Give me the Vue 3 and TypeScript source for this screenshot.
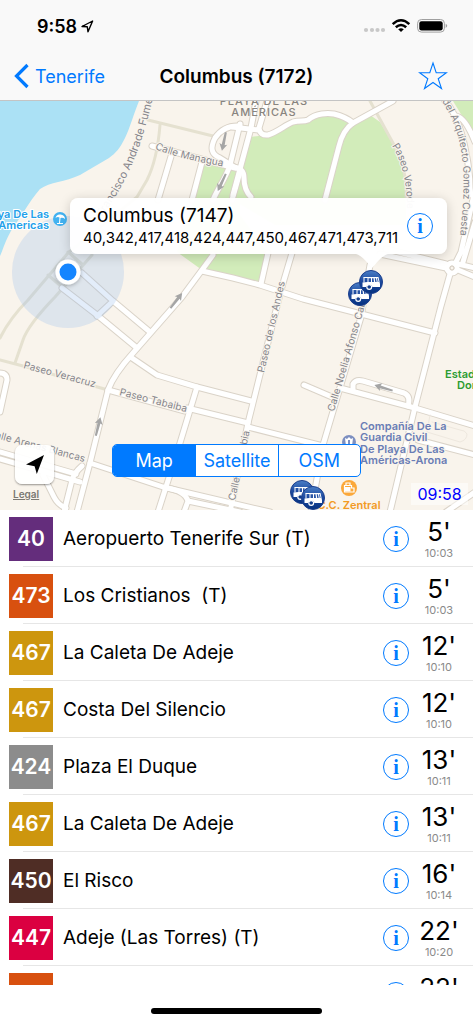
<script setup lang="ts">
import { ref } from 'vue'

interface Departure {
  line: string
  color: string
  name: string
  wait: string
  time: string
}

interface Label {
  text: string
  path: string
  size?: number
}

const departures: Departure[] = [
  { line: '40', color: '#642d7c', name: 'Aeropuerto Tenerife Sur (T)', wait: "5'", time: '10:03' },
  { line: '473', color: '#d8500f', name: 'Los Cristianos  (T)', wait: "5'", time: '10:03' },
  { line: '467', color: '#cd960e', name: 'La Caleta De Adeje', wait: "12'", time: '10:10' },
  { line: '467', color: '#cd960e', name: 'Costa Del Silencio', wait: "12'", time: '10:10' },
  { line: '424', color: '#8c8c8c', name: 'Plaza El Duque', wait: "13'", time: '10:11' },
  { line: '467', color: '#cd960e', name: 'La Caleta De Adeje', wait: "13'", time: '10:11' },
  { line: '450', color: '#4f2d25', name: 'El Risco', wait: "16'", time: '10:14' },
  { line: '447', color: '#db0041', name: 'Adeje (Las Torres) (T)', wait: "22'", time: '10:20' },
  { line: '473', color: '#d8500f', name: 'Los Cristianos  (T)', wait: "22'", time: '10:20' },
]

const layers = ['Map', 'Satellite', 'OSM']
const layer = ref('Map')

const footpaths: string[] = [
  'M148 120 L213 136',
  'M160 125 C158 150 153 168 147 180 L137 197 L68 253 L28 300 Q10 318 0 338',
  'M92 255 L55 297 Q28 325 23 340 L15 363',
  'M68 252 L82 264 M48 275 L62 287',
  'M0 360 L23 366 L108 390',
  'M370 101 L393 143 Q408 170 406 197',
]

const roads: string[] = [
  'M62 288 L97 315 L137 348',
  'M82 273 L113 301 L150 332 M113 301 L97 316',
  'M240 126 C226 125 219 132 215 138 C210 148 211 154 220 158 L236 168',
  'M152 146 L235 168',
  'M172 153 L158 200',
  'M202 162 L192 200',
  'M240 124 L230 165 C226 178 218 188 213 200',
  'M240 172 L232 200',
  'M256 101 L251 128 L233 195',
  'M232 127 L258 130 M267 101 L259 128 Q260 136 268 135 C278 132 285 125 293 122 C300 120 303 122 308 120 C316 113 328 113 334 114 Q346 117 353 123',
  'M393 101 L353 123 Q343 130 339 146 L325 200',
  'M233 167 Q244 168 244 178 Q244 190 251 197',
  'M213 255 L202 270 L182 297 L133 353 Q114 374 108 390 L90 463 L77 512',
  'M202 271 Q220 275 233 278 L260 285 L303 299 L435 333',
  'M268 253 L261 284',
  'M292 253 L281 290 L248 423 L230 512',
  'M380 254 L446 268 M458 270 L475 277 M386 249 L446 264 M458 264 L475 268',
  'M475 190 L461 252 L456 262 M475 222 L463 262',
  'M456 116 Q465 117 475 142',
  'M445 101 C463 120 471 170 470 195',
  'M450 274 L441 306 L415 407 L390 512',
  'M370 265 L361 317 L323 445 L311 512',
  'M132 358 L157 375 L197 387 L251 401',
  'M108 390 L185 411 M187 408 L248 423',
  'M197 387 L180 443 L158 512',
  'M0 452 L76 474 M0 459 L80 482',
  'M90 463 L163 487 L270 512',
  'M82 466 Q74 473 72 480 L64 512',
  'M43 475 L54 497 Q58 505 66 508',
  'M167 488 Q185 491 188 501 L184 512 M188 501 L240 512',
  'M0 373 Q7 373 7 380 L0 412',
  'M248 427 L323 446',
  'M304 385 L332 397 M340 388 L415 408 L475 426',
  'M353 391 V384 Q356 379 363 381 L404 393 Q411 396 408 406',
  'M418 440 L475 455',
  'M475 492 L446 512',
]

const streetLabels: Label[] = [
  { text: 'Francisco Andrade Fumero', path: 'M102 217 C128 180 145 144 158 72', size: 11 },
  { text: 'Calle Managua', path: 'M155 149 Q180 159 226 167' },
  { text: 'Paseo Verode', path: 'M392 146 Q408 170 407 216' },
  { text: 'Av. del Arquitecto Gomez Cuesta', path: 'M432 87 C461 125 471 160 458 250' },
  { text: 'Paseo de los Andes', path: 'M264 373 L285 282' },
  { text: 'Calle Noelia Afonso Cabrera', path: 'M334 412 L374 275' },
  { text: 'Paseo Veracruz', path: 'M23 368 L104 390' },
  { text: 'Paseo Tabaiba', path: 'M119 395 L190 413' },
  { text: 'Calle Arenas Blancas', path: 'M-12 436 L95 465' },
  { text: 'Calle Colombia', path: 'M235 501 L252 420' },
]

const pins = [
  { x: 360, y: 294 },
  { x: 371, y: 282 },
  { x: 302, y: 492 },
  { x: 313, y: 498 },
]

const arrows = [
  'translate(224 141) rotate(192)',
  'translate(222 182) rotate(205)',
  'translate(176 301) rotate(38)',
  'translate(98 427) rotate(14)',
  'translate(384 388) rotate(287)',
]
</script>

<template>
  <div class="screen">
    <header class="top">
      <div class="status">
        <span class="clock">9:58
          <svg width="13" height="13" viewBox="0 0 13 13" aria-hidden="true"><path d="M1 6.5 L11.6 1 L7 11.8 L6.3 6.8 Z" fill="none" stroke="#000" stroke-width="1.4" stroke-linejoin="round" /></svg>
        </span>
        <svg width="86" height="18" viewBox="0 0 86 18" aria-hidden="true">
          <g fill="#c8c8c8"><circle cx="4" cy="13" r="2.1" /><circle cx="10" cy="13" r="2.1" /><circle cx="15.5" cy="13" r="2.1" /><circle cx="21" cy="13" r="2.1" /></g>
          <g fill="none" stroke="#000" stroke-width="2.5"><path d="M30.7 7.1 Q39 -0.7 47.3 7.1" /><path d="M33.8 10.3 Q39 5.6 44.2 10.3" /></g>
          <path d="M36.2 12.2 Q39 10.1 41.8 12.2 L39 15.1 Z" />
          <rect x="55.6" y="2.5" width="26.800" height="12.6" rx="3.8" fill="none" stroke="#a0a0a0" stroke-width="1" />
          <rect x="57.3" y="4.2" width="23.4" height="9.2" rx="2.2" />
          <path d="M83.7 6.7 Q86.8 8.8 83.7 10.9 Z" fill="#a0a0a0" />
        </svg>
      </div>
      <nav class="nav">
        <a class="back" href="#tenerife">
          <svg width="15" height="26" viewBox="0 0 15 26" aria-hidden="true"><path d="M13.500 2 L2.500 13 L13.500 24" fill="none" stroke="#007aff" stroke-width="3.2" /></svg>
          Tenerife
        </a>
        <h1>Columbus (7172)</h1>
        <button class="star" type="button" aria-label="Favourite">
          <svg width="30" height="30" viewBox="0 0 30 30"><path d="M15 2 L18.2 11.700 L28.4 11.700 L20.2 17.8 L23.5 27.5 L15 21.5 L6.5 27.5 L9.8 17.8 L1.6 11.700 L11.8 11.700 Z" fill="none" stroke="#007aff" stroke-width="1.1" /></svg>
        </button>
      </nav>
    </header>

    <section class="map" aria-label="Map of stops">
      <svg class="ground" viewBox="0 101 473 409" preserveAspectRatio="xMidYMid slice">
        <defs>
          <linearGradient id="pin" x1="0" y1="0" x2="0" y2="1"><stop offset="0" stop-color="#4b7fc6" /><stop offset=".45" stop-color="#1e4ba0" /><stop offset="1" stop-color="#053180" /></linearGradient>
          <path v-for="(l, i) in streetLabels" :id="'street' + i" :key="i" :d="l.path" />
          <filter id="shade" x="-50%" y="-50%" width="200%" height="200%"><feDropShadow dx="0" dy="1" stdDeviation="2" flood-opacity=".3" /></filter>
        </defs>
        <rect y="101" width="473" height="409" fill="#f9f4ec" />
        <path d="M0 101 H139 C134 113 130 128 125 138 C120 148 116 153 109 158 L80 175 C65 182 50 182 40 189 C28 203 22 216 14 226 C5 240 3 250 0 256 Z" fill="#abe1f5" />
        <g fill="#d2ecba">
          <path d="M205 163 L240 172 V215 L268 253 L261 285 L202 270 L177 252 Z" />
          <path d="M250 137 L268 135 L293 122 L325 113 L353 123 L370 115 L380 122 L393 143 L405 172 L406 197 V225 H275 L233 200 Z" />
          <path d="M453 101 H473 V134 Z" />
        </g>
        <g fill="none" stroke-linejoin="round" stroke-linecap="round">
          <path v-for="d in footpaths" :key="d" :d="d" stroke="#e5e1d0" stroke-width="3" />
          <g stroke="#dad3c8" stroke-width="7"><path v-for="d in roads" :key="d" :d="d" /><circle cx="452" cy="268" r="5" /></g>
          <g stroke="#fff" stroke-width="5"><path v-for="d in roads" :key="d" :d="d" /><circle cx="452" cy="268" r="5" /></g>
          <path d="M430 415 L427 432 L460 442 Q467 440 467 434 Q465 430 460 430 L432 422" stroke="#eee8df" stroke-width="1" />
        </g>
        <circle cx="452" cy="268" r="2" fill="#f9f4ec" stroke="#d5cdc2" />
        <g fill="#a5a5a5"><path v-for="a in arrows" :key="a" :transform="a" d="M0 -10 L4 -3 L1.5 -4 L1 9 H-1 L-1.5 -4 L-4 -3 Z" /></g>

        <g class="street">
          <text v-for="(l, i) in streetLabels" :key="i" :font-size="l.size ?? 10"><textPath :href="'#street' + i">{{ l.text }}</textPath></text>
        </g>
        <g class="district"><text x="264" y="105">PLAYA DE LAS</text><text x="264" y="116">AMÉRICAS</text></g>

        <circle cx="68" cy="272" r="56" fill="#8fb9ea" fill-opacity=".25" />
        <g class="place beach"><text x="49" y="218">Playa De Las</text><text x="49" y="229">Americas</text></g>
        <circle cx="60" cy="219" r="7" fill="#42b2f1" />
        <path d="M55.5 218 Q56.5 214 60.5 214.5 Q65 215 65 219 Q62.5 217 60.5 218 L60 223 H59 L59.5 217.5 Q57.5 216.5 55.5 218 Z M57 223 H63 V224 H57 Z" fill="#fff" />

        <g class="place police"><text x="360" y="430">Compañía De La</text><text x="360" y="441">Guardia Civil</text><text x="360" y="453">De Playa De Las</text><text x="360" y="464">Américas-Arona</text></g>
        <circle cx="349" cy="442" r="7" fill="#7d8fc0" />
        <path d="M345 438 L347 439 L349 437 L351 439 L353 438 L352 446 H346 Z M348 440 V444 H350 V440 Z" fill="#fff" fill-rule="evenodd" />
        <g class="place stadium"><text x="445" y="378">Estadio</text><text x="457" y="389">Domingo</text></g>
        <g class="place shop"><text x="349" y="509">C.C. Zentral</text></g>
        <circle cx="349" cy="488" r="8" fill="#fba83a" />
        <path d="M346 485 V483 H350 V485 M344.5 485.5 H351.500 V488 H354 V492 H344.5 Z" fill="none" stroke="#fff" stroke-width="1.2" />
        <path d="M344.5 487 H350.500 V491.500 H344.5 Z" fill="#fff" />

        <circle cx="68" cy="272" r="12.5" fill="#fff" filter="url(#shade)" />
        <circle cx="68" cy="272" r="8.5" fill="#1485ff" />

        <g v-for="(p, i) in pins" :key="i" :transform="`translate(${p.x} ${p.y})`">
          <circle r="11.5" fill="url(#pin)" stroke="#1c3f8d" />
          <path d="M-7.5 -5 H7.5 L9 2 V5 H1.5 A3.500 3.500 0 0 0 -5 5 H-8.5 V0.500 L-3.500 0 V-4 H-7.5 Z" fill="#fff" />
          <path d="M-2.5 -3.800 H0 V0 H-2.5 Z M1 -3.800 H2.500 L3 0 H1 Z M3.700 -3.800 H5 L5.700 0 H4.200 Z M6 -3.800 H6.800 L7.600 0 H6.700 Z" fill="#2854a5" />
          <path d="M-7 -4.500 V0.500" stroke="#fff" />
          <circle cx="-1.8" cy="5" r="2.4" fill="#123d8d" stroke="#fff" stroke-width="1.2" />
        </g>
      </svg>

      <div class="callout">
        <div><strong>Columbus (7147)</strong><span>40,342,417,418,424,447,450,467,471,473,711</span></div>
        <button class="info" type="button" aria-label="Stop details">i</button>
      </div>

      <button class="locate" type="button" aria-label="My location">
        <svg width="22" height="22" viewBox="0 0 22 22"><path d="M20 1 L12.800 20 L10.600 12.200 L2 10.600 Z" /></svg>
      </button>
      <a class="legal" href="#legal">Legal</a>
      <div class="segments">
        <button v-for="l in layers" :key="l" type="button" :class="{ on: l === layer }" :aria-pressed="l === layer" @click="layer = l">{{ l }}</button>
      </div>
      <time class="now">09:58</time>
    </section>

    <ul class="list">
      <li v-for="(d, i) in departures" :key="i">
        <span class="badge" :style="{ background: d.color }">{{ d.line }}</span>
        <span class="name">{{ d.name }}</span>
        <button class="info" type="button" :aria-label="'Details for line ' + d.line">i</button>
        <span class="when"><b>{{ d.wait }}</b><time>{{ d.time }}</time></span>
      </li>
    </ul>
    <footer class="home"><span></span></footer>
  </div>
</template>

<style>
body {
  margin: 0;
  background: #fff;
}
</style>

<style scoped>
.screen {
  height: 100vh;
  display: flex;
  flex-direction: column;
  overflow: hidden;
  background: #fff;
  color: #000;
  font-family: Inter, "Liberation Sans", sans-serif;
}
button {
  padding: 0;
  font-family: inherit;
  border: 0;
  background: none;
  cursor: pointer;
}
.top {
  flex: none;
  background: #f9f9f9;
  border-bottom: 1px solid #c4c4c4;
}
.status {
  display: flex;
  align-items: center;
  justify-content: space-between;
  height: 52px;
  padding: 0 25px 0 37px;
}
.clock {
  display: flex;
  align-items: center;
  gap: 4px;
  font-size: 18px;
  font-weight: 600;
}
.nav {
  display: grid;
  grid-template-columns: 1fr auto 1fr;
  align-items: center;
  height: 48px;
  padding: 0 14px;
}
.back {
  display: flex;
  align-items: center;
  gap: 6px;
  font-size: 18px;
  color: #007aff;
  text-decoration: none;
}
h1 {
  margin: 0;
  font-size: 19px;
  font-weight: 600;
}
.star {
  justify-self: end;
  height: 30px;
  margin-right: 11px;
}
.map {
  position: relative;
  flex: none;
  height: 409px;
  overflow: hidden;
}
.ground {
  display: block;
  width: 100%;
  height: 100%;
}
.street text {
  fill: #85858b;
  stroke: #f9f4ec;
  stroke-width: 2px;
  paint-order: stroke;
}
.district {
  font-size: 11px;
  font-weight: 500;
  letter-spacing: 1px;
  fill: #88847f;
  text-anchor: middle;
}
.place {
  font-size: 11px;
  font-weight: 600;
  stroke: #f9f4ec;
  stroke-width: 2px;
  paint-order: stroke;
}
.beach {
  fill: #22a0ea;
  stroke: #fff;
  text-anchor: end;
}
.police {
  fill: #6a7db5;
}
.stadium {
  fill: #2c9c33;
}
.shop {
  fill: #f29a24;
  text-anchor: middle;
}
.callout {
  position: absolute;
  left: 70px;
  right: 26px;
  top: 97px;
  display: flex;
  align-items: center;
  justify-content: space-between;
  height: 56px;
  box-sizing: border-box;
  padding: 0 14px 0 13px;
  border-radius: 8px;
  background: rgba(255, 255, 255, 0.96);
  box-shadow: 0 2px 12px rgba(0, 0, 0, 0.18);
}
.callout::after {
  content: "";
  position: absolute;
  left: 286px;
  top: 100%;
  width: 32px;
  height: 14px;
  background: #fff;
  clip-path: path("M0 0 H32 C25 2 20 10 16 14 C12 10 7 2 0 0 Z");
}
.callout div {
  display: flex;
  flex-direction: column;
}
.callout strong {
  font-size: 19px;
  font-weight: 400;
  line-height: 24px;
}
.callout span {
  font-size: 15px;
  line-height: 20px;
  white-space: nowrap;
}
.info {
  flex: none;
  width: 26px;
  height: 26px;
  border: 1px solid #007aff;
  border-radius: 50%;
  font: 700 20px/24px "Liberation Serif", serif;
  color: #007aff;
}
.locate {
  position: absolute;
  left: 15px;
  bottom: 26px;
  display: grid;
  place-items: center;
  width: 39px;
  height: 39px;
  border-radius: 7px;
  background: rgba(255, 255, 255, 0.93);
  box-shadow: 0 1px 2px rgba(0, 0, 0, 0.4);
}
.legal {
  position: absolute;
  left: 13px;
  bottom: 9px;
  font-size: 10px;
  line-height: 14px;
  font-weight: 600;
  color: #7b7973;
}
.segments {
  position: absolute;
  left: 112px;
  right: 112px;
  bottom: 33px;
  display: grid;
  grid-template-columns: repeat(3, 1fr);
  height: 33px;
  box-sizing: border-box;
  overflow: hidden;
  border: 1px solid #007aff;
  border-radius: 5px;
  background: #fff;
}
.segments button {
  font-size: 18px;
  color: #007aff;
}
.segments button + button {
  border-left: 1px solid #007aff;
}
.segments .on {
  background: #007aff;
  color: #fff;
}
.now {
  position: absolute;
  right: 5px;
  bottom: 5px;
  width: 57px;
  font-size: 16px;
  line-height: 22px;
  text-align: center;
  color: #00f;
  background: rgba(255, 255, 255, 0.5);
}
.list {
  flex: 1;
  min-height: 0;
  margin: 0;
  padding: 0;
  overflow: hidden;
  list-style: none;
}
.list li {
  position: relative;
  display: flex;
  align-items: center;
  height: 57px;
  padding: 0 4px 0 9px;
}
.list li::after {
  content: "";
  position: absolute;
  left: 23px;
  right: 0;
  bottom: 0;
  border-bottom: 1px solid #e6e6e6;
}
.badge {
  width: 44px;
  font-size: 21px;
  font-weight: 600;
  line-height: 44px;
  text-align: center;
  color: #fff;
}
.name {
  flex: 1;
  margin-left: 10px;
  font-size: 19px;
  line-height: 26px;
  white-space: pre;
}
.when {
  display: flex;
  flex-direction: column;
  align-items: center;
  width: 60px;
}
.when b {
  font-size: 26px;
  font-weight: 400;
  line-height: 28px;
}
.when time {
  font-size: 11px;
  line-height: 14px;
  color: #8a8a8a;
}
.home {
  flex: none;
  display: flex;
  justify-content: center;
  height: 39px;
}
.home span {
  width: 36%;
  height: 6px;
  margin-top: 23px;
  border-radius: 3px;
  background: #000;
}
</style>
